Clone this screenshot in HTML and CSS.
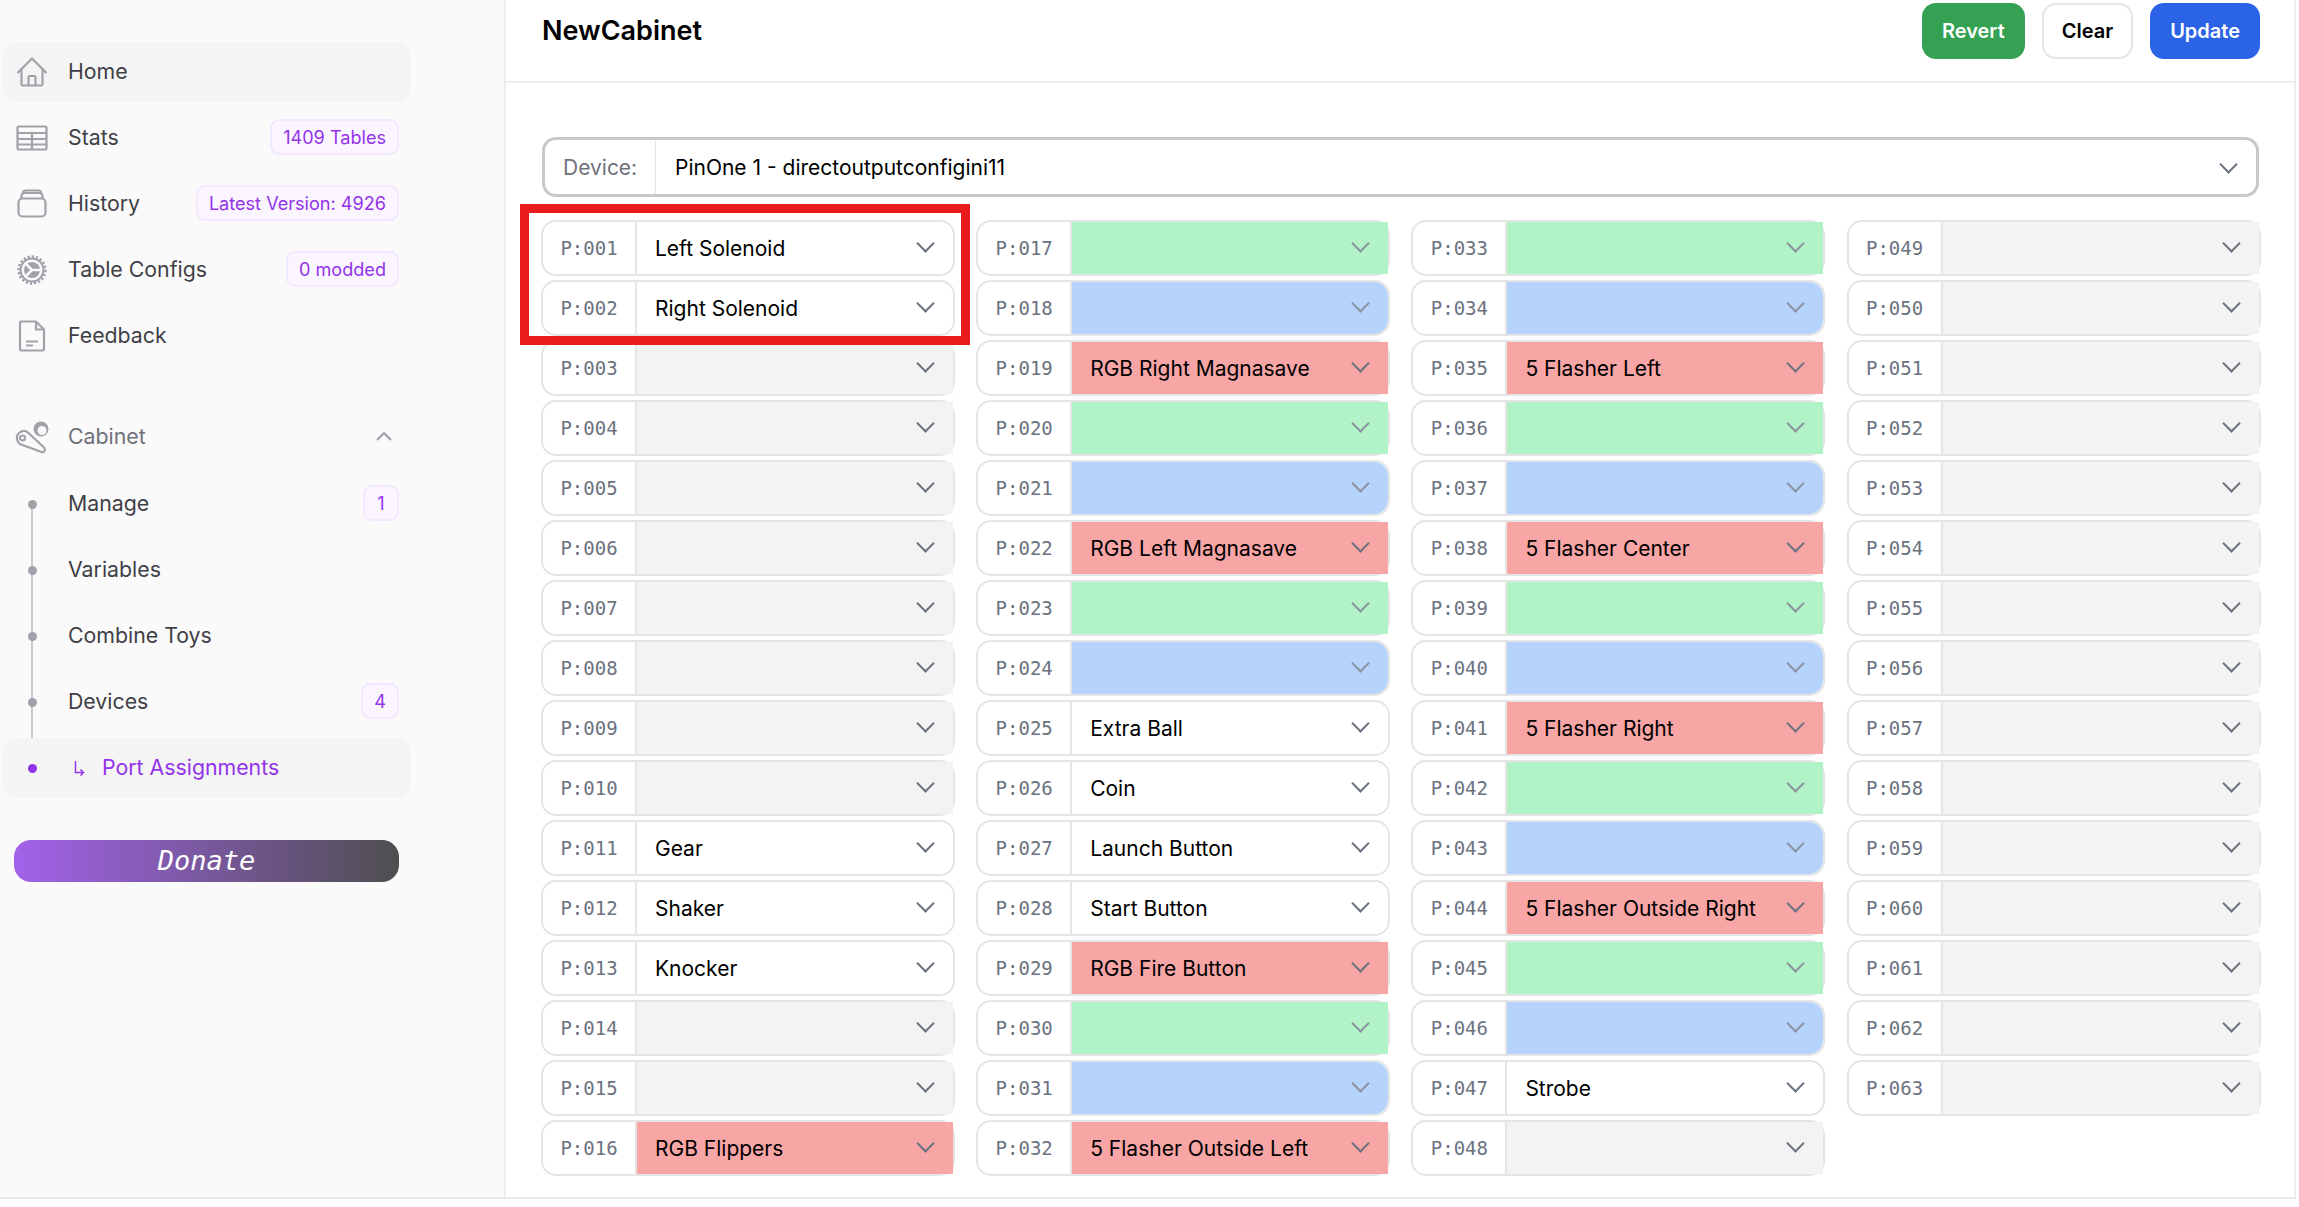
FILE: index.html
```html
<!DOCTYPE html>
<html lang="en">
<head>
<meta charset="utf-8" />
<meta name="viewport" content="width=device-width, initial-scale=1.0" />
<title>Port Assignments</title>
<link rel="stylesheet" href="styles.css">
</head>
<body>
<div class="page">
    <aside class="sidebar">
        <ul class="nav">
            <li class="nav-item active">
                <svg class="nav-icon" viewBox="0 0 32 32"><path d="M1.500 17 16 2.500 30.500 17M5.500 13.500V28a1.500 1.500 0 0 0 1.500 1.500h18a1.500 1.500 0 0 0 1.500-1.500V13.500M12.500 29.500V21a1 1 0 0 1 1-1h5a1 1 0 0 1 1 1v8.500"/></svg>
                <span>Home</span>
            </li>
            <li class="nav-item">
                <svg class="nav-icon" viewBox="0 0 32 32"><rect x="1.500" y="4.500" width="29" height="23" rx="1.500"/><path d="M1.500 11h29M1.500 17h29M1.500 22.500h29M16 11v16.500"/></svg>
                <span>Stats</span>
                <span class="badge">1409 Tables</span>
            </li>
            <li class="nav-item">
                <svg class="nav-icon" viewBox="0 0 32 32"><rect x="2.500" y="10.500" width="27" height="18" rx="4"/><path d="M5.500 10.500V8a3 3 0 0 1 3-3h15a3 3 0 0 1 3 3v2.500M7 6.500V5a2.500 2.500 0 0 1 2.500-2.500h13A2.500 2.500 0 0 1 25 5v1.500"/></svg>
                <span>History</span>
                <span class="badge">Latest Version: 4926</span>
            </li>
            <li class="nav-item">
                <svg class="nav-icon" viewBox="0 0 32 32"><circle cx="16" cy="16" r="13.500" stroke-width="2.500" stroke-dasharray="2.200 2"/><circle cx="16" cy="16" r="11.500" stroke-width="2"/><circle class="solid" cx="16" cy="16" r="8"/><path class="spokes" d="M16 16 10 10M16 16 10 22M16 16H25"/></svg>
                <span>Table Configs</span>
                <span class="badge">0 modded</span>
            </li>
            <li class="nav-item">
                <svg class="nav-icon" viewBox="0 0 32 32"><path d="M20 1.500H5a1 1 0 0 0-1 1v27a1 1 0 0 0 1 1h22a1 1 0 0 0 1-1V9.500zM20 1.500V9.500h8M10 21.500h12M10 25.500h7"/></svg>
                <span>Feedback</span>
            </li>
        </ul>

        <div class="nav-item group-title">
            <svg class="nav-icon" viewBox="0 0 32 32"><circle class="solid" cx="25" cy="8" r="7.500"/><circle class="cutout" cx="26" cy="9.500" r="4.500"/><path d="M3 12C6 9.500 9.500 9.500 12 11.500L28 26.500C30 28.500 28.500 32 25.500 31L5 23.500C.5 21.500-.5 15 3 12Z"/><circle cx="6.500" cy="17" r="2.500"/></svg>
            <span>Cabinet</span>
            <svg class="caret" viewBox="0 0 16 10"><path d="M1 9 8 2l7 7"/></svg>
        </div>

        <ul class="nav sub-nav">
            <li class="nav-item"><span>Manage</span><span class="badge">1</span></li>
            <li class="nav-item"><span>Variables</span></li>
            <li class="nav-item"><span>Combine Toys</span></li>
            <li class="nav-item"><span>Devices</span><span class="badge">4</span></li>
            <li class="nav-item active current">
                <svg class="sub-arrow" viewBox="0 0 11 15"><path d="M1.500 0V11.500H9.500M6.500 8.500l3 3-3 3"/></svg>
                <span>Port Assignments</span>
            </li>
        </ul>

        <div class="donate">Donate</div>
    </aside>

    <main class="main">
        <header class="topbar">
            <h1>NewCabinet</h1>
            <div class="actions">
                <button class="btn btn-green">Revert</button>
                <button class="btn btn-plain">Clear</button>
                <button class="btn btn-blue">Update</button>
            </div>
        </header>

        <section class="content">
            <div class="device">
                <span class="device-label">Device:</span>
                <span class="device-value">PinOne 1 - directoutputconfigini11</span>
            </div>

            <div class="ports">
                <div class="highlight"></div>

                <div class="port"><label>P:001</label><div class="pick">Left Solenoid</div></div>
                <div class="port"><label>P:002</label><div class="pick">Right Solenoid</div></div>
                <div class="port"><label>P:003</label><div class="pick gray"></div></div>
                <div class="port"><label>P:004</label><div class="pick gray"></div></div>
                <div class="port"><label>P:005</label><div class="pick gray"></div></div>
                <div class="port"><label>P:006</label><div class="pick gray"></div></div>
                <div class="port"><label>P:007</label><div class="pick gray"></div></div>
                <div class="port"><label>P:008</label><div class="pick gray"></div></div>
                <div class="port"><label>P:009</label><div class="pick gray"></div></div>
                <div class="port"><label>P:010</label><div class="pick gray"></div></div>
                <div class="port"><label>P:011</label><div class="pick">Gear</div></div>
                <div class="port"><label>P:012</label><div class="pick">Shaker</div></div>
                <div class="port"><label>P:013</label><div class="pick">Knocker</div></div>
                <div class="port"><label>P:014</label><div class="pick gray"></div></div>
                <div class="port"><label>P:015</label><div class="pick gray"></div></div>
                <div class="port"><label>P:016</label><div class="pick red">RGB Flippers</div></div>

                <div class="port"><label>P:017</label><div class="pick green"></div></div>
                <div class="port"><label>P:018</label><div class="pick blue"></div></div>
                <div class="port"><label>P:019</label><div class="pick red">RGB Right Magnasave</div></div>
                <div class="port"><label>P:020</label><div class="pick green"></div></div>
                <div class="port"><label>P:021</label><div class="pick blue"></div></div>
                <div class="port"><label>P:022</label><div class="pick red">RGB Left Magnasave</div></div>
                <div class="port"><label>P:023</label><div class="pick green"></div></div>
                <div class="port"><label>P:024</label><div class="pick blue"></div></div>
                <div class="port"><label>P:025</label><div class="pick">Extra Ball</div></div>
                <div class="port"><label>P:026</label><div class="pick">Coin</div></div>
                <div class="port"><label>P:027</label><div class="pick">Launch Button</div></div>
                <div class="port"><label>P:028</label><div class="pick">Start Button</div></div>
                <div class="port"><label>P:029</label><div class="pick red">RGB Fire Button</div></div>
                <div class="port"><label>P:030</label><div class="pick green"></div></div>
                <div class="port"><label>P:031</label><div class="pick blue"></div></div>
                <div class="port"><label>P:032</label><div class="pick red">5 Flasher Outside Left</div></div>

                <div class="port"><label>P:033</label><div class="pick green"></div></div>
                <div class="port"><label>P:034</label><div class="pick blue"></div></div>
                <div class="port"><label>P:035</label><div class="pick red">5 Flasher Left</div></div>
                <div class="port"><label>P:036</label><div class="pick green"></div></div>
                <div class="port"><label>P:037</label><div class="pick blue"></div></div>
                <div class="port"><label>P:038</label><div class="pick red">5 Flasher Center</div></div>
                <div class="port"><label>P:039</label><div class="pick green"></div></div>
                <div class="port"><label>P:040</label><div class="pick blue"></div></div>
                <div class="port"><label>P:041</label><div class="pick red">5 Flasher Right</div></div>
                <div class="port"><label>P:042</label><div class="pick green"></div></div>
                <div class="port"><label>P:043</label><div class="pick blue"></div></div>
                <div class="port"><label>P:044</label><div class="pick red">5 Flasher Outside Right</div></div>
                <div class="port"><label>P:045</label><div class="pick green"></div></div>
                <div class="port"><label>P:046</label><div class="pick blue"></div></div>
                <div class="port"><label>P:047</label><div class="pick">Strobe</div></div>
                <div class="port"><label>P:048</label><div class="pick gray"></div></div>

                <div class="port"><label>P:049</label><div class="pick gray"></div></div>
                <div class="port"><label>P:050</label><div class="pick gray"></div></div>
                <div class="port"><label>P:051</label><div class="pick gray"></div></div>
                <div class="port"><label>P:052</label><div class="pick gray"></div></div>
                <div class="port"><label>P:053</label><div class="pick gray"></div></div>
                <div class="port"><label>P:054</label><div class="pick gray"></div></div>
                <div class="port"><label>P:055</label><div class="pick gray"></div></div>
                <div class="port"><label>P:056</label><div class="pick gray"></div></div>
                <div class="port"><label>P:057</label><div class="pick gray"></div></div>
                <div class="port"><label>P:058</label><div class="pick gray"></div></div>
                <div class="port"><label>P:059</label><div class="pick gray"></div></div>
                <div class="port"><label>P:060</label><div class="pick gray"></div></div>
                <div class="port"><label>P:061</label><div class="pick gray"></div></div>
                <div class="port"><label>P:062</label><div class="pick gray"></div></div>
                <div class="port"><label>P:063</label><div class="pick gray"></div></div>
            </div>
        </section>
    </main>
</div>
</body>
</html>
```

FILE: styles.css
```css
* {
    box-sizing: border-box;
}
html, body {
    height: 100%;
}
body {
    margin: 0;
    background: #fff;
    color: #000;
    font-family: Inter, "Liberation Sans", sans-serif;
    font-size: 21px;
    overflow: hidden;
}
ul {
    list-style: none;
    margin: 0;
    padding: 0;
}
.page {
    display: flex;
    width: 2296px;
    height: 1199px;
    border-bottom: 2px solid #e9e9ea;
}

/* sidebar */
.sidebar {
    width: 506px;
    flex-shrink: 0;
    padding: 42px 0 0 2px;
    background: #fafafa;
    border-right: 2px solid #eeeeef;
    font-size: 21.300px;
}
.nav {
    display: flex;
    flex-direction: column;
    gap: 6px;
    width: 409px;
}
.nav-item {
    display: flex;
    align-items: center;
    height: 60px;
    padding: 0 12px 2px 66px;
    border-radius: 15px;
    color: #3f3f46;
    position: relative;
}
.nav-item.active {
    background: #f4f4f4;
}
.nav-icon {
    position: absolute;
    left: 14px;
    top: 14px;
    width: 32px;
    height: 32px;
    fill: none;
    stroke: #a1a1aa;
    stroke-width: 2.200;
    overflow: visible;
}
.nav-icon .solid {
    fill: #a1a1aa;
    stroke: none;
}
.nav-icon .cutout {
    fill: #fafafa;
    stroke: none;
}
.nav-icon .spokes {
    stroke: #fafafa;
    stroke-width: 2.500;
}
.badge {
    margin-left: auto;
    min-width: 36px;
    height: 36px;
    padding: 0 11px;
    display: flex;
    align-items: center;
    justify-content: center;
    font-size: 18.100px;
    color: #9333ea;
    background: #faf5ff;
    border: 2px solid #f3e8ff;
    border-radius: 9px;
}
.group-title {
    margin-top: 41px;
    width: 409px;
    color: #71717a;
}
.caret {
    margin-left: auto;
    margin-right: 7px;
    width: 16px;
    height: 10px;
    fill: none;
    stroke: #a1a1aa;
    stroke-width: 2.200;
}
.sub-nav {
    position: relative;
    margin-top: 7px;
}
.sub-nav::before {
    content: "";
    position: absolute;
    left: 29px;
    top: 32px;
    height: 264px;
    width: 2px;
    background: #c8c8cc;
}
.sub-nav .nav-item::before {
    content: "";
    position: absolute;
    left: 26px;
    top: 26px;
    width: 9px;
    height: 9px;
    border-radius: 50%;
    background: #a1a1aa;
}
.sub-nav .current::before {
    background: #9333ea;
}
.current {
    color: #9333ea;
}
.sub-arrow {
    width: 11px;
    height: 15px;
    margin: 2px 17px 0 6px;
    fill: none;
    stroke: #9333ea;
    stroke-width: 1.500;
}
.donate {
    margin: 42px 0 0 12px;
    width: 385px;
    height: 42px;
    border-radius: 17px;
    background: linear-gradient(to right, #a362ea, #4e4e50);
    color: #fff;
    font-family: "DejaVu Sans Mono", monospace;
    font-style: italic;
    font-size: 27px;
    line-height: 42px;
    text-align: center;
}

/* main */
.main {
    flex: 1;
    min-width: 0;
    border-right: 2px solid #eeeeef;
}
.topbar {
    display: flex;
    align-items: flex-start;
    justify-content: space-between;
    height: 83px;
    padding: 3px 34px 0 36px;
    border-bottom: 2px solid #eeeeef;
}
h1 {
    margin: 1px 0 0;
    font-size: 27px;
    font-weight: 600;
    line-height: 54px;
}
.actions {
    display: flex;
    gap: 17px;
}
.btn {
    height: 56px;
    padding: 0 18px 1px;
    border: 2px solid transparent;
    border-radius: 14px;
    font: 600 20px Inter, sans-serif;
}
.btn-green {
    background: #34a153;
    color: #fff;
}
.btn-plain {
    background: #fff;
    border-color: #e5e5e5;
    color: #000;
}
.btn-blue {
    background: #2b63e6;
    color: #fff;
}
.content {
    padding: 54px 0 0 35px;
}
.device {
    display: flex;
    align-items: center;
    width: 1717px;
    height: 60px;
    margin-left: 1px;
    border: 3px solid #c8c8cb;
    border-radius: 14px;
    position: relative;
}
.device::after,
.pick::after {
    content: "";
    position: absolute;
    width: 11px;
    height: 11px;
    border-right: 2.500px solid #6b7280;
    border-bottom: 2.500px solid #6b7280;
    transform: rotate(45deg);
}
.device::after {
    right: 21px;
    top: 18px;
}
.device-label {
    width: 111px;
    height: 100%;
    padding-left: 18px;
    display: flex;
    align-items: center;
    color: #71717a;
    border-right: 1px solid #e5e5e5;
}
.device-value {
    padding-left: 19px;
}
.ports {
    position: relative;
    display: grid;
    grid-auto-flow: column;
    grid-template-rows: repeat(16, 56px);
    grid-template-columns: repeat(4, 414px);
    gap: 4px 21.200px;
    margin-top: 23px;
}
.highlight {
    position: absolute;
    left: -21px;
    top: -16px;
    width: 450px;
    height: 141px;
    border: 9px solid #e81c1c;
    z-index: 2;
}
.port {
    display: flex;
    border: 2px solid #e5e5e5;
    border-radius: 15px;
    background: #fff;
}
.port label {
    width: 94px;
    flex-shrink: 0;
    display: flex;
    align-items: center;
    justify-content: center;
    font-family: "DejaVu Sans Mono", monospace;
    font-size: 19px;
    color: #6b7280;
    border-right: 2px solid #e5e5e5;
}
.pick {
    flex: 1;
    position: relative;
    display: flex;
    align-items: center;
    padding-left: 18px;
}
.pick::after {
    right: 21px;
    top: 15px;
}
.gray {
    background: #f3f3f3;
}
.green {
    background: #b1f3c7;
}
.blue {
    background: #b6d4fb;
    border-radius: 0 14px 14px 0;
}
.red {
    background: #f8a5a5;
}
.green::after,
.blue::after {
    border-color: #8b93a0;
}
```
